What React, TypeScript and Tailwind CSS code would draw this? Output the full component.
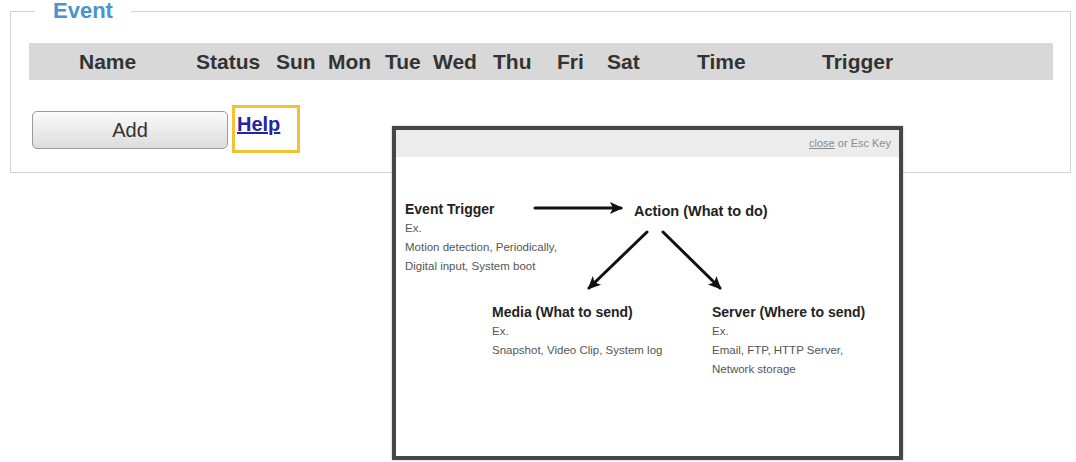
import React from "react";

const columns = [
  { label: "Name", width: "w-[117px]" },
  { label: "Status", width: "w-[80px]" },
  { label: "Sun", width: "w-[52px]" },
  { label: "Mon", width: "w-[57px]" },
  { label: "Tue", width: "w-[48px]" },
  { label: "Wed", width: "w-[60px]" },
  { label: "Thu", width: "w-[64px]" },
  { label: "Fri", width: "w-[50px]" },
  { label: "Sat", width: "w-[90px]" },
  { label: "Time", width: "w-[125px]" },
  { label: "Trigger", width: "w-auto" },
];

const Block = ({
  title,
  lines,
  className,
}: {
  title: string;
  lines: string[];
  className: string;
}) => (
  <div className={`absolute ${className}`}>
    <div className="text-[14px] leading-[20px] font-bold text-[#222] whitespace-nowrap">{title}</div>
    <div className="text-[11.5px] leading-[19px] text-[#555] whitespace-nowrap">
      {lines.map((l) => (
        <div key={l}>{l}</div>
      ))}
    </div>
  </div>
);

const HelpModal = () => (
  <div className="absolute left-[392px] top-[126px] w-[511px] h-[334px] border-4 border-[#464646] bg-white shadow-[0_0_2px_rgba(0,0,0,0.3)] flex flex-col">
    <div className="h-[27px] bg-[#ececec] flex items-center justify-end pr-[8px] text-[11px] text-[#8a8a8a]">
      <span className="underline">close</span>
      <span>&nbsp;or Esc Key</span>
    </div>
    <div className="relative flex-1">
      <Block title="Event Trigger" lines={["Ex.", "Motion detection, Periodically,", "Digital input, System boot"]} className="left-[9px] top-[42px]" />
      <div className="absolute left-[238px] top-[44px] text-[14.5px] leading-[20px] font-bold text-[#222] whitespace-nowrap">
        Action (What to do)
      </div>
      <Block title="Media (What to send)" lines={["Ex.", "Snapshot, Video Clip, System log"]} className="left-[96px] top-[145px]" />
      <Block title="Server (Where to send)" lines={["Ex.", "Email, FTP, HTTP Server,", "Network storage"]} className="left-[316px] top-[145px]" />
      <svg className="absolute left-0 top-0" width="503" height="300" viewBox="0 0 503 300">
        <defs>
          <marker id="head" markerWidth="14" markerHeight="14" refX="11" refY="7" orient="auto" markerUnits="userSpaceOnUse">
            <path d="M0 1 L13 7 L0 13 L3 7 Z" fill="#111" />
          </marker>
        </defs>
        <g stroke="#111" strokeWidth="3" fill="none" strokeLinecap="round">
          <line x1="139" y1="51" x2="225" y2="51" markerEnd="url(#head)" />
          <line x1="251" y1="75" x2="193" y2="131" markerEnd="url(#head)" />
          <line x1="267" y1="75" x2="324" y2="131" markerEnd="url(#head)" />
        </g>
      </svg>
    </div>
  </div>
);

export default function App() {
  return (
    <div className="relative w-[1076px] h-[462px] bg-white overflow-hidden pt-[1px] font-['Liberation_Sans',Arial,sans-serif]">
      <fieldset className="ml-[10px] w-[1061px] border border-[#d4d4d4] pb-[19px]">
        <legend className="ml-[24px] px-[18px] text-[22px] leading-[20px] font-bold text-[#4b93cf]">Event</legend>
        <div className="mt-[22px] ml-[18px] w-[1024px] h-[37px] bg-[#d8d8d8] flex items-center pl-[50px] text-[21px] font-bold text-[#333]">
          {columns.map((c) => (
            <div key={c.label} className={c.width}>
              {c.label}
            </div>
          ))}
        </div>
        <div className="mt-[25px] ml-[21px] flex items-start">
          <button className="mt-[6px] w-[196px] h-[38px] rounded-[5px] border border-[#9a9a9a] bg-linear-to-b from-[#fbfbfb] to-[#dcdcdc] text-[20px] text-[#333]">
            Add
          </button>
          <div className="ml-[4px] w-[68px] h-[48px] border-[3px] border-[#f1c232] pl-[2px] pt-[5px]">
            <a href="#" className="text-[20px] leading-[22px] font-bold text-[#2424a8] underline">
              Help
            </a>
          </div>
        </div>
      </fieldset>
      <HelpModal />
    </div>
  );
}
